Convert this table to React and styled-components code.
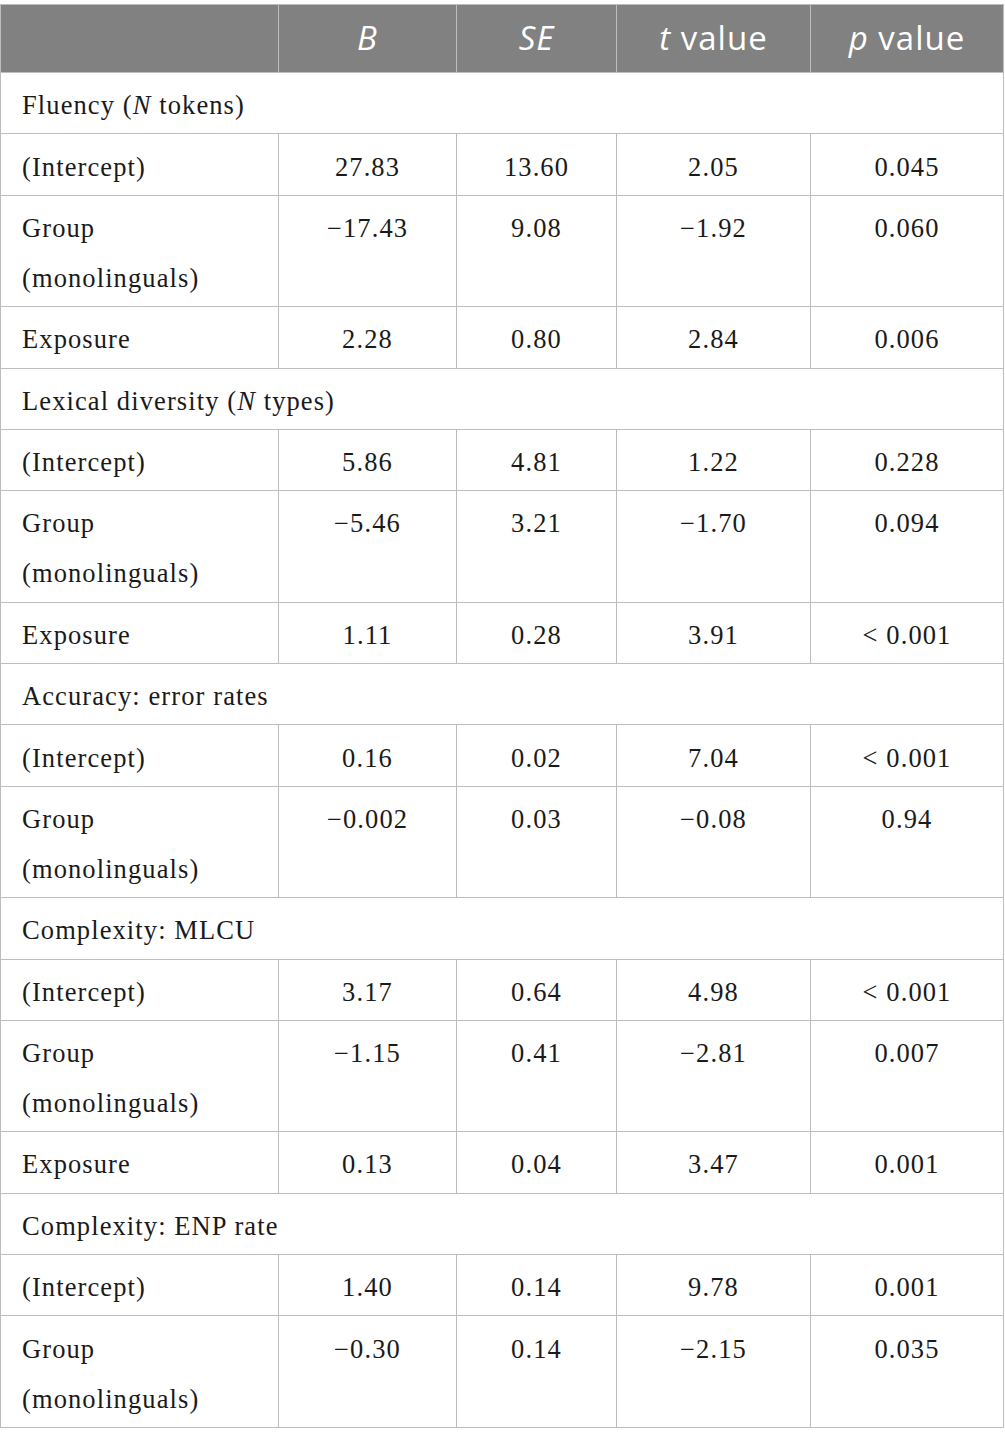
import React from 'react';
import styled, { createGlobalStyle } from 'styled-components';

const GlobalStyle = createGlobalStyle`
  html, body {
    margin: 0;
    padding: 0;
    background: #ffffff;
  }
`;

const Page = styled.div`
  padding-top: 4px;
  width: 1003px;
`;

const Table = styled.table`
  width: 1003px;
  border-collapse: collapse;
  table-layout: fixed;
  font-family: 'Liberation Serif', 'Times New Roman', serif;
  color: #1a1a1a;
`;

const HeadCell = styled.th`
  background-color: #808180;
  color: #ffffff;
  font-family: 'Open Sans', 'Noto Sans', sans-serif;
  font-weight: 400;
  font-size: 33px;
  letter-spacing: 1px;
  height: 65px;
  padding: 0 0 2px;
  text-align: center;
  border: 1px solid #bdbdbd;
  em {
    font-style: italic;
  }
`;

const Cell = styled.td`
  border: 1px solid #bdbdbd;
  font-size: 26.5px;
  letter-spacing: 1.1px;
  line-height: 50px;
  padding: 7.2px ${p => (p.$label ? '8px' : '0')} 3.2px ${p => (p.$label ? '21px' : '0')};
  text-align: ${p => (p.$label ? 'left' : 'center')};
  vertical-align: top;
  em {
    font-style: italic;
  }
`;

const cols = [278, 178, 160, 194, 193];

const sections = [
  {
    title: <>Fluency (<em>N</em> tokens)</>,
    rows: [
      ['(Intercept)', '27.83', '13.60', '2.05', '0.045'],
      ['Group (monolinguals)', '\u221217.43', '9.08', '\u22121.92', '0.060'],
      ['Exposure', '2.28', '0.80', '2.84', '0.006'],
    ],
  },
  {
    title: <>Lexical diversity (<em>N</em> types)</>,
    rows: [
      ['(Intercept)', '5.86', '4.81', '1.22', '0.228'],
      ['Group (monolinguals)', '\u22125.46', '3.21', '\u22121.70', '0.094'],
      ['Exposure', '1.11', '0.28', '3.91', '< 0.001'],
    ],
  },
  {
    title: 'Accuracy: error rates',
    rows: [
      ['(Intercept)', '0.16', '0.02', '7.04', '< 0.001'],
      ['Group (monolinguals)', '\u22120.002', '0.03', '\u22120.08', '0.94'],
    ],
  },
  {
    title: 'Complexity: MLCU',
    rows: [
      ['(Intercept)', '3.17', '0.64', '4.98', '< 0.001'],
      ['Group (monolinguals)', '\u22121.15', '0.41', '\u22122.81', '0.007'],
      ['Exposure', '0.13', '0.04', '3.47', '0.001'],
    ],
  },
  {
    title: 'Complexity: ENP rate',
    rows: [
      ['(Intercept)', '1.40', '0.14', '9.78', '0.001'],
      ['Group (monolinguals)', '\u22120.30', '0.14', '\u22122.15', '0.035'],
    ],
  },
];

const App = () => (
  <Page>
    <GlobalStyle />
    <Table>
      <colgroup>
        {cols.map((w, i) => (
          <col key={i} style={{ width: w }} />
        ))}
      </colgroup>
      <thead>
        <tr>
          <HeadCell />
          <HeadCell><em>B</em></HeadCell>
          <HeadCell><em>SE</em></HeadCell>
          <HeadCell><em>t</em> value</HeadCell>
          <HeadCell><em>p</em> value</HeadCell>
        </tr>
      </thead>
      <tbody>
        {sections.map((section, si) => (
          <React.Fragment key={si}>
            <tr>
              <Cell $label colSpan={5}>{section.title}</Cell>
            </tr>
            {section.rows.map((row, ri) => (
              <tr key={ri}>
                {row.map((value, ci) => (
                  <Cell key={ci} $label={ci === 0}>{value}</Cell>
                ))}
              </tr>
            ))}
          </React.Fragment>
        ))}
      </tbody>
    </Table>
  </Page>
);

export default App;
